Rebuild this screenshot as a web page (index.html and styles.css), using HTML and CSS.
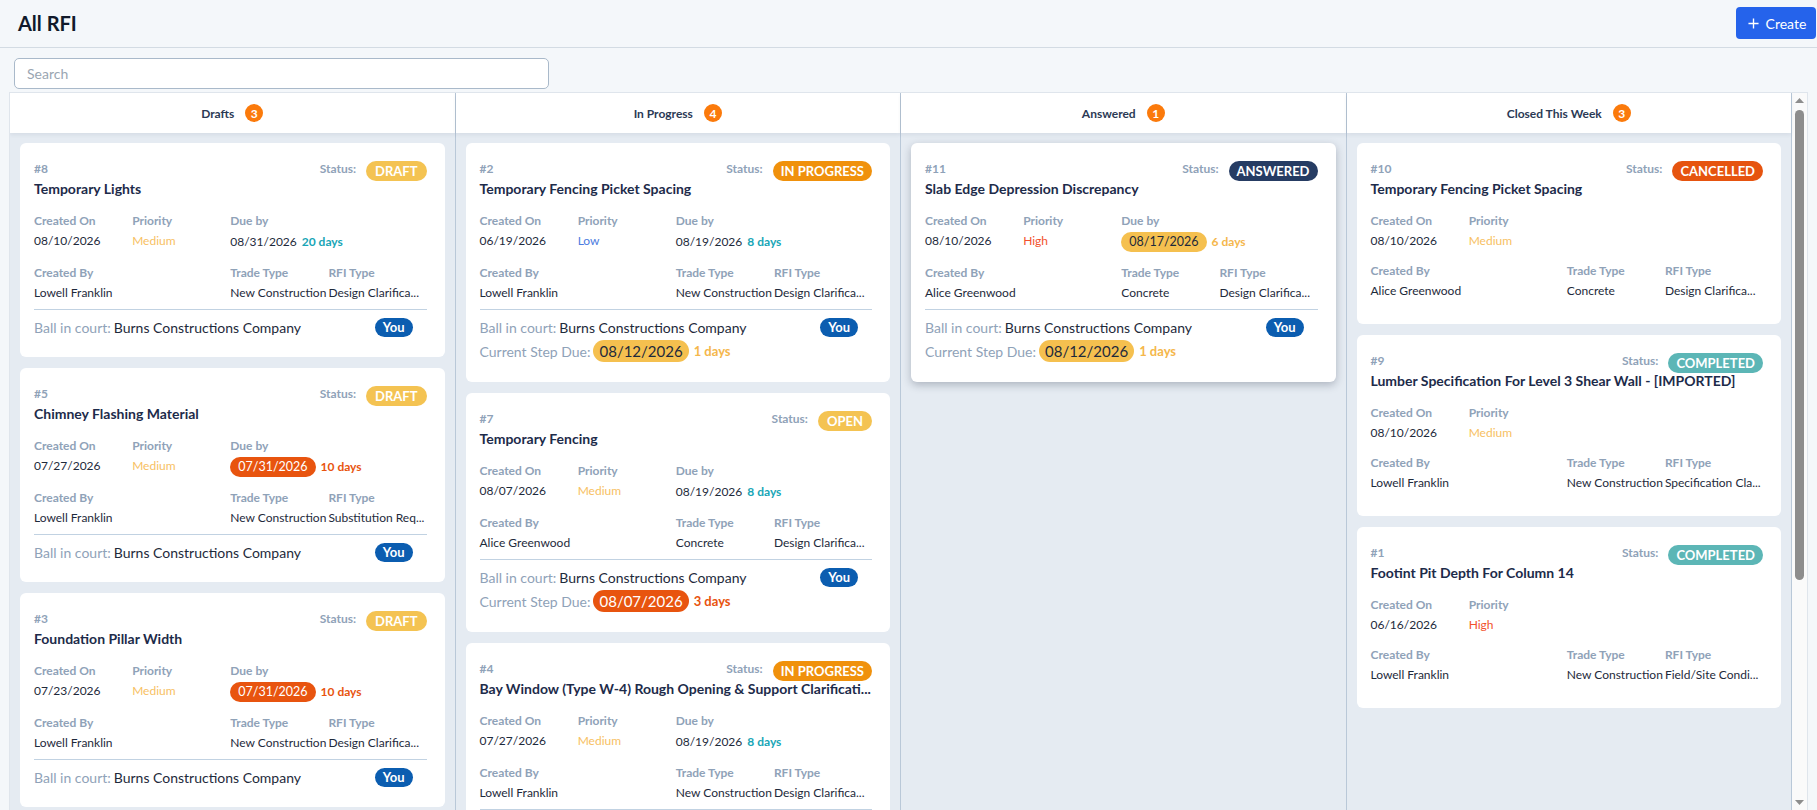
FILE: index.html
```html
<!DOCTYPE html>
<html lang="en">
<head>
<meta charset="utf-8">
<title>All RFI</title>
<link rel="stylesheet" href="styles.css">
</head>
<body>
<header class="topbar">
  <h1 class="page-title">All RFI</h1>
  <button class="btn-create" type="button">
    <svg class="plus" viewBox="0 0 12 12" width="12" height="12"><path d="M6 0.5V11.5M0.5 6H11.5" stroke="#fff" stroke-width="1.5" fill="none"/></svg>
    <span>Create</span>
  </button>
</header>
<div class="toolbar">
  <input class="search" type="text" placeholder="Search">
</div>
<div class="board">
  <div class="columns">
  <!-- Drafts -->
  <section class="col">
    <div class="col-head"><span>Drafts</span><span class="count">3</span></div>
    <div class="col-body">
      <article class="card">
        <div class="card-top"><span class="rfi-no">#8</span><span class="status"><span class="status-label">Status:</span><span class="badge b-draft">DRAFT</span></span></div>
        <div class="title">Temporary Lights</div>
        <div class="info-row r1">
          <div class="field"><div class="label">Created On</div><div class="value">08/10/2026</div></div>
          <div class="field"><div class="label">Priority</div><div class="value p-medium">Medium</div></div>
          <div class="field span2"><div class="label">Due by</div><div class="value due">08/31/2026<span class="days d-teal">20 days</span></div></div>
        </div>
        <div class="info-row r2">
          <div class="field span2"><div class="label">Created By</div><div class="value">Lowell Franklin</div></div>
          <div class="field"><div class="label">Trade Type</div><div class="value">New Construction</div></div>
          <div class="field"><div class="label">RFI Type</div><div class="value">Design Clarifica...</div></div>
        </div>
        <div class="card-foot">
          <div class="bic"><span class="foot-label">Ball in court:</span><span class="foot-value">Burns Constructions Company</span><span class="you">You</span></div>
        </div>
      </article>
      <article class="card">
        <div class="card-top"><span class="rfi-no">#5</span><span class="status"><span class="status-label">Status:</span><span class="badge b-draft">DRAFT</span></span></div>
        <div class="title">Chimney Flashing Material</div>
        <div class="info-row r1">
          <div class="field"><div class="label">Created On</div><div class="value">07/27/2026</div></div>
          <div class="field"><div class="label">Priority</div><div class="value p-medium">Medium</div></div>
          <div class="field span2"><div class="label">Due by</div><div class="value due"><span class="pill pill-red">07/31/2026</span><span class="days d-red">10 days</span></div></div>
        </div>
        <div class="info-row r2">
          <div class="field span2"><div class="label">Created By</div><div class="value">Lowell Franklin</div></div>
          <div class="field"><div class="label">Trade Type</div><div class="value">New Construction</div></div>
          <div class="field"><div class="label">RFI Type</div><div class="value">Substitution Req...</div></div>
        </div>
        <div class="card-foot">
          <div class="bic"><span class="foot-label">Ball in court:</span><span class="foot-value">Burns Constructions Company</span><span class="you">You</span></div>
        </div>
      </article>
      <article class="card">
        <div class="card-top"><span class="rfi-no">#3</span><span class="status"><span class="status-label">Status:</span><span class="badge b-draft">DRAFT</span></span></div>
        <div class="title">Foundation Pillar Width</div>
        <div class="info-row r1">
          <div class="field"><div class="label">Created On</div><div class="value">07/23/2026</div></div>
          <div class="field"><div class="label">Priority</div><div class="value p-medium">Medium</div></div>
          <div class="field span2"><div class="label">Due by</div><div class="value due"><span class="pill pill-red">07/31/2026</span><span class="days d-red">10 days</span></div></div>
        </div>
        <div class="info-row r2">
          <div class="field span2"><div class="label">Created By</div><div class="value">Lowell Franklin</div></div>
          <div class="field"><div class="label">Trade Type</div><div class="value">New Construction</div></div>
          <div class="field"><div class="label">RFI Type</div><div class="value">Design Clarifica...</div></div>
        </div>
        <div class="card-foot">
          <div class="bic"><span class="foot-label">Ball in court:</span><span class="foot-value">Burns Constructions Company</span><span class="you">You</span></div>
        </div>
      </article>
    </div>
  </section>

  <!-- In Progress -->
  <section class="col">
    <div class="col-head"><span>In Progress</span><span class="count">4</span></div>
    <div class="col-body">
      <article class="card">
        <div class="card-top"><span class="rfi-no">#2</span><span class="status"><span class="status-label">Status:</span><span class="badge b-progress">IN PROGRESS</span></span></div>
        <div class="title">Temporary Fencing Picket Spacing</div>
        <div class="info-row r1">
          <div class="field"><div class="label">Created On</div><div class="value">06/19/2026</div></div>
          <div class="field"><div class="label">Priority</div><div class="value p-low">Low</div></div>
          <div class="field span2"><div class="label">Due by</div><div class="value due">08/19/2026<span class="days d-teal">8 days</span></div></div>
        </div>
        <div class="info-row r2">
          <div class="field span2"><div class="label">Created By</div><div class="value">Lowell Franklin</div></div>
          <div class="field"><div class="label">Trade Type</div><div class="value">New Construction</div></div>
          <div class="field"><div class="label">RFI Type</div><div class="value">Design Clarifica...</div></div>
        </div>
        <div class="card-foot">
          <div class="bic"><span class="foot-label">Ball in court:</span><span class="foot-value">Burns Constructions Company</span><span class="you">You</span></div>
          <div class="step"><span class="foot-label">Current Step Due:</span><span class="step-pill pill-yellow">08/12/2026</span><span class="days d-yellow">1 days</span></div>
        </div>
      </article>
      <article class="card">
        <div class="card-top"><span class="rfi-no">#7</span><span class="status"><span class="status-label">Status:</span><span class="badge b-draft">OPEN</span></span></div>
        <div class="title">Temporary Fencing</div>
        <div class="info-row r1">
          <div class="field"><div class="label">Created On</div><div class="value">08/07/2026</div></div>
          <div class="field"><div class="label">Priority</div><div class="value p-medium">Medium</div></div>
          <div class="field span2"><div class="label">Due by</div><div class="value due">08/19/2026<span class="days d-teal">8 days</span></div></div>
        </div>
        <div class="info-row r2">
          <div class="field span2"><div class="label">Created By</div><div class="value">Alice Greenwood</div></div>
          <div class="field"><div class="label">Trade Type</div><div class="value">Concrete</div></div>
          <div class="field"><div class="label">RFI Type</div><div class="value">Design Clarifica...</div></div>
        </div>
        <div class="card-foot">
          <div class="bic"><span class="foot-label">Ball in court:</span><span class="foot-value">Burns Constructions Company</span><span class="you">You</span></div>
          <div class="step"><span class="foot-label">Current Step Due:</span><span class="step-pill pill-red">08/07/2026</span><span class="days d-red">3 days</span></div>
        </div>
      </article>
      <article class="card">
        <div class="card-top"><span class="rfi-no">#4</span><span class="status"><span class="status-label">Status:</span><span class="badge b-progress">IN PROGRESS</span></span></div>
        <div class="title">Bay Window (Type W-4) Rough Opening &amp; Support Clarificati...</div>
        <div class="info-row r1">
          <div class="field"><div class="label">Created On</div><div class="value">07/27/2026</div></div>
          <div class="field"><div class="label">Priority</div><div class="value p-medium">Medium</div></div>
          <div class="field span2"><div class="label">Due by</div><div class="value due">08/19/2026<span class="days d-teal">8 days</span></div></div>
        </div>
        <div class="info-row r2">
          <div class="field span2"><div class="label">Created By</div><div class="value">Lowell Franklin</div></div>
          <div class="field"><div class="label">Trade Type</div><div class="value">New Construction</div></div>
          <div class="field"><div class="label">RFI Type</div><div class="value">Design Clarifica...</div></div>
        </div>
        <div class="card-foot">
          <div class="bic"><span class="foot-label">Ball in court:</span><span class="foot-value">Burns Constructions Company</span><span class="you">You</span></div>
          <div class="step"><span class="foot-label">Current Step Due:</span><span class="step-pill pill-yellow">08/12/2026</span><span class="days d-yellow">1 days</span></div>
        </div>
      </article>
      <article class="card">
        <div class="card-top"><span class="rfi-no">#6</span><span class="status"><span class="status-label">Status:</span><span class="badge b-progress">IN PROGRESS</span></span></div>
        <div class="title">Roof Truss Bearing Detail</div>
        <div class="info-row r1">
          <div class="field"><div class="label">Created On</div><div class="value">07/20/2026</div></div>
          <div class="field"><div class="label">Priority</div><div class="value p-medium">Medium</div></div>
          <div class="field span2"><div class="label">Due by</div><div class="value due">08/19/2026<span class="days d-teal">8 days</span></div></div>
        </div>
        <div class="info-row r2">
          <div class="field span2"><div class="label">Created By</div><div class="value">Lowell Franklin</div></div>
          <div class="field"><div class="label">Trade Type</div><div class="value">New Construction</div></div>
          <div class="field"><div class="label">RFI Type</div><div class="value">Design Clarifica...</div></div>
        </div>
        <div class="card-foot">
          <div class="bic"><span class="foot-label">Ball in court:</span><span class="foot-value">Burns Constructions Company</span><span class="you">You</span></div>
          <div class="step"><span class="foot-label">Current Step Due:</span><span class="step-pill pill-yellow">08/12/2026</span><span class="days d-yellow">1 days</span></div>
        </div>
      </article>
    </div>
  </section>

  <!-- Answered -->
  <section class="col">
    <div class="col-head"><span>Answered</span><span class="count">1</span></div>
    <div class="col-body">
      <article class="card card-raised">
        <div class="card-top"><span class="rfi-no">#11</span><span class="status"><span class="status-label">Status:</span><span class="badge b-answered">ANSWERED</span></span></div>
        <div class="title">Slab Edge Depression Discrepancy</div>
        <div class="info-row r1">
          <div class="field"><div class="label">Created On</div><div class="value">08/10/2026</div></div>
          <div class="field"><div class="label">Priority</div><div class="value p-high">High</div></div>
          <div class="field span2"><div class="label">Due by</div><div class="value due"><span class="pill pill-yellow">08/17/2026</span><span class="days d-yellow">6 days</span></div></div>
        </div>
        <div class="info-row r2">
          <div class="field span2"><div class="label">Created By</div><div class="value">Alice Greenwood</div></div>
          <div class="field"><div class="label">Trade Type</div><div class="value">Concrete</div></div>
          <div class="field"><div class="label">RFI Type</div><div class="value">Design Clarifica...</div></div>
        </div>
        <div class="card-foot">
          <div class="bic"><span class="foot-label">Ball in court:</span><span class="foot-value">Burns Constructions Company</span><span class="you">You</span></div>
          <div class="step"><span class="foot-label">Current Step Due:</span><span class="step-pill pill-yellow">08/12/2026</span><span class="days d-yellow">1 days</span></div>
        </div>
      </article>
    </div>
  </section>

  <!-- Closed This Week -->
  <section class="col">
    <div class="col-head"><span>Closed This Week</span><span class="count">3</span></div>
    <div class="col-body">
      <article class="card card-closed">
        <div class="card-top"><span class="rfi-no">#10</span><span class="status"><span class="status-label">Status:</span><span class="badge b-cancelled">CANCELLED</span></span></div>
        <div class="title">Temporary Fencing Picket Spacing</div>
        <div class="info-row r1">
          <div class="field"><div class="label">Created On</div><div class="value">08/10/2026</div></div>
          <div class="field"><div class="label">Priority</div><div class="value p-medium">Medium</div></div>
        </div>
        <div class="info-row r2">
          <div class="field span2"><div class="label">Created By</div><div class="value">Alice Greenwood</div></div>
          <div class="field"><div class="label">Trade Type</div><div class="value">Concrete</div></div>
          <div class="field"><div class="label">RFI Type</div><div class="value">Design Clarifica...</div></div>
        </div>
      </article>
      <article class="card card-closed">
        <div class="card-top"><span class="rfi-no">#9</span><span class="status"><span class="status-label">Status:</span><span class="badge b-completed">COMPLETED</span></span></div>
        <div class="title">Lumber Specification For Level 3 Shear Wall - [IMPORTED]</div>
        <div class="info-row r1">
          <div class="field"><div class="label">Created On</div><div class="value">08/10/2026</div></div>
          <div class="field"><div class="label">Priority</div><div class="value p-medium">Medium</div></div>
        </div>
        <div class="info-row r2">
          <div class="field span2"><div class="label">Created By</div><div class="value">Lowell Franklin</div></div>
          <div class="field"><div class="label">Trade Type</div><div class="value">New Construction</div></div>
          <div class="field"><div class="label">RFI Type</div><div class="value">Specification Cla...</div></div>
        </div>
      </article>
      <article class="card card-closed">
        <div class="card-top"><span class="rfi-no">#1</span><span class="status"><span class="status-label">Status:</span><span class="badge b-completed">COMPLETED</span></span></div>
        <div class="title">Footint Pit Depth For Column 14</div>
        <div class="info-row r1">
          <div class="field"><div class="label">Created On</div><div class="value">06/16/2026</div></div>
          <div class="field"><div class="label">Priority</div><div class="value p-high">High</div></div>
        </div>
        <div class="info-row r2">
          <div class="field span2"><div class="label">Created By</div><div class="value">Lowell Franklin</div></div>
          <div class="field"><div class="label">Trade Type</div><div class="value">New Construction</div></div>
          <div class="field"><div class="label">RFI Type</div><div class="value">Field/Site Condi...</div></div>
        </div>
      </article>
    </div>
  </section>
  </div>

  <div class="scrollbar" aria-hidden="true">
    <div class="sb-btn"><svg viewBox="0 0 9 5" width="9" height="5"><polygon points="0,5 4.5,0 9,5" fill="#8d8d8d"/></svg></div>
    <div class="sb-track"><div class="sb-thumb"></div></div>
    <div class="sb-btn"><svg viewBox="0 0 9 5" width="9" height="5"><polygon points="0,0 4.5,5 9,0" fill="#8d8d8d"/></svg></div>
  </div>
</div>
</body>
</html>
```

FILE: styles.css
```css
* { box-sizing: border-box; }

html, body { height: 100%; }

body {
  margin: 0;
  height: 100vh;
  display: flex;
  flex-direction: column;
  overflow: hidden;
  background: #f4f7fa;
  font-family: Lato, "Liberation Sans", sans-serif;
  color: #1e2a3b;
}

/* ---------- top bar ---------- */
.topbar {
  height: 48px;
  flex: none;
  display: flex;
  align-items: center;
  justify-content: space-between;
  padding: 0 1px 1px 18px;
  border-bottom: 1px solid #d3dbe3;
}

.page-title {
  margin: 0;
  font-size: 20px;
  font-weight: 700;
  line-height: 24px;
  color: #111a2b;
}

.btn-create {
  width: 80px;
  height: 32px;
  display: flex;
  align-items: center;
  justify-content: center;
  gap: 7px;
  border: none;
  border-radius: 4px;
  background: #2563eb;
  color: #fff;
  font-family: Lato, "Liberation Sans", sans-serif;
  font-size: 14px;
  padding: 0 8px 0 10px;
}

.plus { display: block; width: 11px; height: 11px; }

/* ---------- search ---------- */
.toolbar {
  flex: none;
  padding: 10px 0 3px 14px;
}

.search {
  display: block;
  width: 535px;
  height: 31px;
  border: 1px solid #a9b9ca;
  border-radius: 5px;
  background: #fff;
  padding: 0 12px;
  font-family: Lato, "Liberation Sans", sans-serif;
  font-size: 14px;
  color: #1e2a3b;
  outline: none;
}
.search::placeholder { color: #9aa6b2; }

/* ---------- board ---------- */
.board {
  flex: 1;
  min-height: 0;
  margin: 0 9px;
  border: 1px solid #dfe5ec;
  border-bottom: none;
  background: #e5ebf2;
  overflow: hidden;
  display: flex;
}

.columns {
  flex: 1;
  min-width: 0;
  display: grid;
  grid-template-columns: repeat(4, 1fr);
  align-content: start;
}

.scrollbar {
  flex: none;
  width: 15px;
  background: #fafafa;
  display: flex;
  flex-direction: column;
}

.sb-btn {
  flex: none;
  height: 15px;
  display: flex;
  align-items: center;
  justify-content: center;
}
.sb-btn svg { display: block; }

.sb-track {
  flex: 1;
  padding-top: 2px;
}

.sb-thumb {
  width: 9px;
  height: 470px;
  margin: 0 auto;
  border-radius: 5px;
  background: #8d8d8d;
}

.col {
  display: flex;
  flex-direction: column;
  border-right: 1px solid #b9c8d8;
  min-width: 0;
}

.col-head {
  flex: none;
  height: 40px;
  background: #fff;
  display: flex;
  align-items: center;
  justify-content: center;
  gap: 11px;
  font-size: 12px;
  font-weight: 700;
  color: #2b3a55;
  box-shadow: 0 2px 4px rgba(40, 60, 90, 0.08);
  position: relative;
  z-index: 1;
}

.count {
  width: 18px;
  height: 18px;
  border-radius: 50%;
  background: #fb7a0b;
  color: #fff;
  font-size: 12px;
  font-weight: 700;
  display: flex;
  align-items: center;
  justify-content: center;
}

.col-body {
  flex: 1;
  background: #e5ebf2;
  padding: 10px;
  display: flex;
  flex-direction: column;
  gap: 11px;
}

/* ---------- card ---------- */
.card {
  background: #fff;
  border-radius: 6px;
  padding: 18px 18px 20px 14px;
}

.card-raised { box-shadow: 0 3px 8px rgba(30, 40, 60, 0.28); }

.card-closed { padding-bottom: 23px; }

.card-top {
  height: 20px;
  display: flex;
  justify-content: space-between;
  align-items: flex-start;
}

.rfi-no {
  font-size: 12px;
  font-weight: 700;
  line-height: 16px;
  color: #8fa2b8;
}

.status {
  display: flex;
  align-items: flex-start;
  gap: 10px;
}

.status-label {
  font-size: 12px;
  font-weight: 700;
  line-height: 16px;
  color: #8fa2b8;
}

.badge {
  height: 20px;
  line-height: 20px;
  padding: 0 8px;
  border-radius: 10px;
  color: #fff;
  font-size: 13px;
  font-weight: 700;
  white-space: nowrap;
}
.b-draft { background: #f4c352; padding: 0 9px; }
.b-progress { background: #f0910c; }
.b-answered { background: #263c63; }
.b-cancelled { background: #e6540f; }
.b-completed { background: #5cb6b6; }

.title {
  margin-top: -2px;
  font-size: 14px;
  font-weight: 700;
  line-height: 20px;
  color: #1d2b4a;
  white-space: nowrap;
}

.info-row {
  display: grid;
  grid-template-columns: repeat(4, 1fr);
}
.r1 { margin-top: 12px; }
.r2 { margin-top: 10px; }

.field { min-width: 0; }
.span2 { grid-column: span 2; }

.label {
  font-size: 12px;
  font-weight: 700;
  line-height: 20px;
  color: #8fa2b8;
}

.value {
  font-size: 12px;
  line-height: 20px;
  color: #1e2a3b;
  white-space: nowrap;
}

.value.due {
  height: 22px;
  display: flex;
  align-items: center;
}

.p-medium { color: #f7bf63; }
.p-low { color: #4c7be0; }
.p-high { color: #f2512c; }

.pill {
  height: 20px;
  line-height: 20px;
  padding: 0 8px;
  border-radius: 10px;
  font-size: 12.5px;
}
.pill-red { background: #e8540f; color: #fff; }
.pill-yellow { background: #f5c04f; color: #1e2a3b; }

.days {
  margin-left: 5px;
  font-size: 12px;
  font-weight: 700;
}
.d-teal { color: #17a5b6; }
.d-red { color: #e8540f; }
.d-yellow { color: #f5b74c; }

/* ---------- footer ---------- */
.card-foot {
  margin-top: 6px;
  padding-top: 7px;
  border-top: 1px solid #c1d2e2;
}

.bic, .step {
  display: flex;
  align-items: center;
  white-space: nowrap;
}
.bic { height: 20px; }
.step { height: 22px; margin-top: 3px; }

.foot-label {
  font-size: 14px;
  color: #8fa2b8;
  margin-right: 3px;
}
.foot-value {
  font-size: 14px;
  color: #1e2a3b;
}

.you {
  margin-left: auto;
  margin-right: 14px;
  height: 19px;
  line-height: 19px;
  padding: 0 8px;
  border-radius: 10px;
  background: #0b5db0;
  color: #fff;
  font-size: 13px;
  font-weight: 700;
}

.step-pill {
  height: 22px;
  line-height: 22px;
  padding: 0 6px;
  border-radius: 11px;
  font-size: 15px;
}
.step .days { font-size: 13px; }
```
